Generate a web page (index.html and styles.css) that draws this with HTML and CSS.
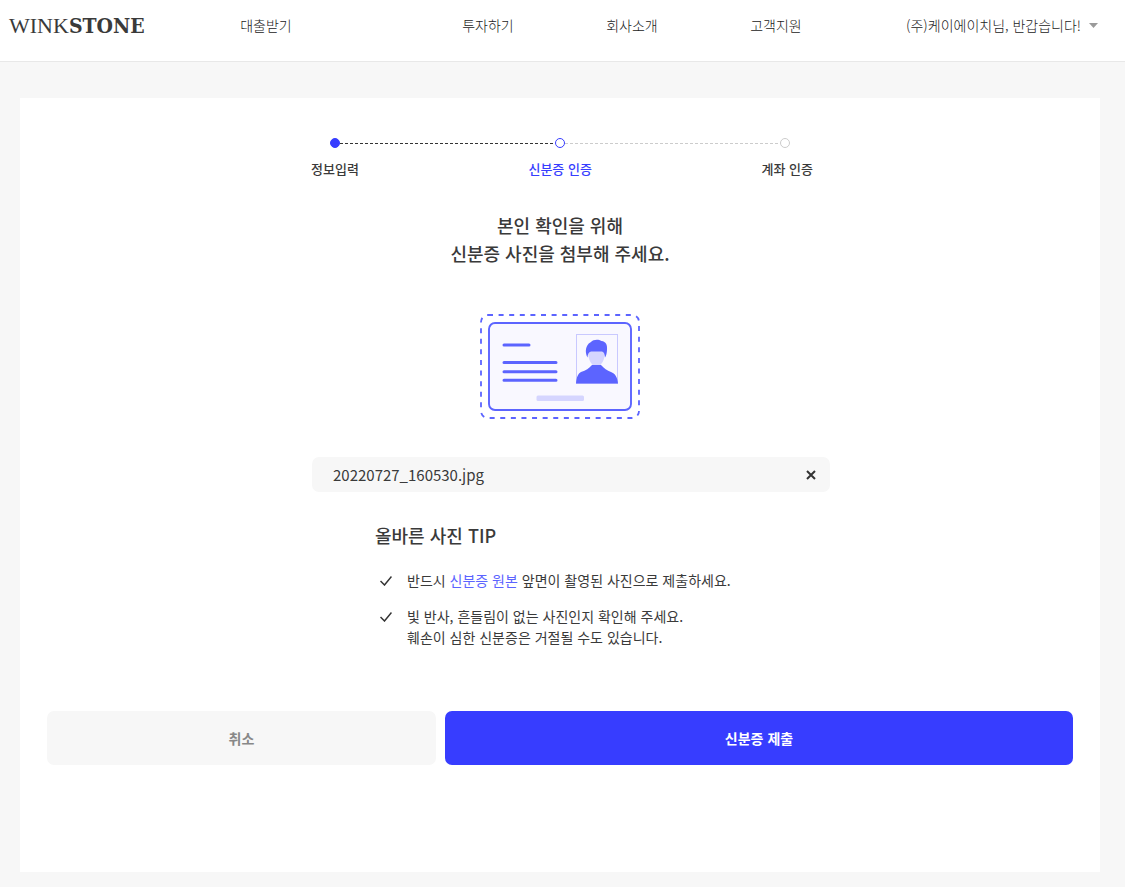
FILE: index.html
```
<!DOCTYPE html>
<html lang="ko">
<head>
    <meta charset="UTF-8">
    <meta name="viewport" content="width=device-width, initial-scale=1.0">
    <title>WINKSTONE</title>
    <link rel="stylesheet" href="styles.css">
</head>
<body>
    <header class="header">
        <a href="#" class="logo"><span class="logo-wink">WINK</span><span class="logo-stone">STONE</span></a>
        <nav class="nav">
            <a href="#" class="nav-main">대출받기</a>
            <a href="#">투자하기</a>
            <a href="#">회사소개</a>
            <a href="#">고객지원</a>
        </nav>
        <button type="button" class="user">
            (주)케이에이치님, 반갑습니다!
            <svg width="9" height="5" viewBox="0 0 9 5"><path d="M0 0h9L4.500 5z" fill="#9a9a9a"/></svg>
        </button>
    </header>

    <main class="main">
        <form class="panel">
            <div class="progress">
                <div class="track">
                    <span class="dot done"></span>
                    <span class="line done"></span>
                    <span class="dot current"></span>
                    <span class="line"></span>
                    <span class="dot"></span>
                </div>
                <ol class="steps">
                    <li>정보입력</li>
                    <li class="current">신분증 인증</li>
                    <li>계좌 인증</li>
                </ol>
            </div>

            <h1 class="title">본인 확인을 위해<br>신분증 사진을 첨부해 주세요.</h1>

            <svg class="id-card" width="160" height="105" viewBox="0 0 160 105" fill="none">
                <rect x="1" y="1" width="158" height="103" rx="7" stroke="#5c64ff" stroke-width="1.800" stroke-dasharray="5 5.600"/>
                <rect x="9" y="9" width="142" height="87" rx="6" fill="#f9f8ff" stroke="#5c64ff" stroke-width="1.900"/>
                <path d="M24 31h25M24 48.500h52M24 57.800h52M24 66.300h52" stroke="#5c64ff" stroke-width="3" stroke-linecap="round"/>
                <rect x="56.500" y="81.500" width="47.500" height="5.500" rx="1.500" fill="#d5d5ff"/>
                <rect x="96.500" y="20.500" width="41" height="49" stroke="#c9c9ff"/>
                <path d="M112.500 49h8v8l4 4-8 3-8-3 4-4z" fill="#d5d5ff"/>
                <path d="M108 37c0-5 3-8 8.500-8s8.500 3 8.500 8c0 9-3.500 15-8.500 15s-8.500-6-8.500-15z" fill="#d5d5ff"/>
                <path d="M107.500 43.500c-2.500-5-2-9.500.5-13 1-1.500 2-2 3-2.500 2-2.500 7.500-3 10.500-1 4.500.5 6 4 5.500 9-.2 3-.7 5.500-2 7.500-.3-3.500-.8-5.500-3-6h-11c-2.500.5-3.200 2.500-3.500 6z" fill="#5c64ff"/>
                <path d="M96 69.500c.5-6 2-10 5-11.500 5-1.500 8-3.500 11-7h9c3 3.500 6 5.500 10 7 4 1.500 6.500 5 7 11.500z" fill="#5c64ff"/>
            </svg>

            <div class="file">
                <span>20220727_160530.jpg</span>
                <button type="button" class="file-remove" aria-label="삭제">
                    <svg width="10" height="10" viewBox="0 0 10 10"><path d="M1 1l8 8M9 1L1 9" stroke="#333" stroke-width="2"/></svg>
                </button>
            </div>

            <section class="tip">
                <h2>올바른 사진 TIP</h2>
                <ul>
                    <li>
                        <svg width="12" height="10" viewBox="0 0 12 10"><path d="M.5 5l4 4 7-8.500" fill="none" stroke="#333" stroke-width="1.500"/></svg>
                        <p>반드시 <em>신분증 원본</em> 앞면이 촬영된 사진으로 제출하세요.</p>
                    </li>
                    <li>
                        <svg width="12" height="10" viewBox="0 0 12 10"><path d="M.5 5l4 4 7-8.500" fill="none" stroke="#333" stroke-width="1.500"/></svg>
                        <p>빛 반사, 흔들림이 없는 사진인지 확인해 주세요.<br>훼손이 심한 신분증은 거절될 수도 있습니다.</p>
                    </li>
                </ul>
            </section>

            <div class="buttons">
                <button type="button" class="btn btn-cancel">취소</button>
                <button type="submit" class="btn btn-submit">신분증 제출</button>
            </div>
        </form>
    </main>
</body>
</html>
```
FILE: styles.css
```
* {
    box-sizing: border-box;
}

body {
    margin: 0;
    background-color: #f7f7f7;
    color: #3a3a3a;
    font-family: "Noto Sans CJK KR", sans-serif;
    font-size: 14px;
    line-height: 21px;
}

a {
    color: inherit;
    text-decoration: none;
}

button {
    border: none;
    background: none;
    padding: 0;
    color: inherit;
    font-family: inherit;
    font-size: 14px;
    line-height: 21px;
    cursor: pointer;
}

h1, h2, p, ul, ol {
    margin: 0;
    padding: 0;
}

li {
    list-style: none;
}

.header {
    display: flex;
    align-items: center;
    height: 62px;
    padding: 0 27px 10px 9px;
    background-color: #fff;
    border-bottom: 1px solid #e8e8e8;
}

.logo {
    display: flex;
    align-items: baseline;
    width: 147px;
}

.logo-wink {
    font-family: "Liberation Serif", serif;
    font-size: 22px;
}

.logo-stone {
    font-family: "DejaVu Serif Condensed", "DejaVu Serif", serif;
    font-size: 21px;
    font-weight: bold;
}

.nav {
    display: flex;
    color: #222;
    font-weight: 300;
}

.nav a {
    width: 144px;
    text-align: center;
}

.nav .nav-main {
    width: 220px;
    margin-right: 40px;
}

.user {
    display: flex;
    align-items: center;
    gap: 8px;
    margin-left: auto;
    color: #222;
    font-weight: 300;
}

.main {
    padding: 36px 25px 15px 20px;
}

.panel {
    display: flex;
    flex-direction: column;
    align-items: center;
    padding: 40px 27px 107px;
    background-color: #fff;
}

.progress {
    width: 502px;
    max-width: 100%;
    margin-left: 4px;
}

.track {
    display: flex;
    align-items: center;
    padding: 0 23px 0 19px;
}

.dot {
    width: 10px;
    height: 10px;
    border: 1px solid #ccc;
    border-radius: 50%;
}

.dot.current {
    border-color: #373dff;
}

.dot.done {
    border-color: #373dff;
    background-color: #373dff;
}

.line {
    flex: 1;
    height: 1px;
    background: repeating-linear-gradient(to right, #ccc 0 3px, transparent 3px 5px);
}

.line.done {
    background: repeating-linear-gradient(to right, #333 0 3px, transparent 3px 5px);
}

.steps {
    display: flex;
    justify-content: space-between;
    margin-top: 10px;
    font-size: 13px;
    font-weight: 500;
}

.steps .current {
    color: #373dff;
}

.title {
    margin-top: 32px;
    font-size: 18px;
    font-weight: 500;
    line-height: 28px;
    text-align: center;
}

.id-card {
    margin-top: 47px;
}

.file {
    display: flex;
    align-items: center;
    justify-content: space-between;
    width: 518px;
    max-width: 100%;
    height: 35px;
    margin: 38px 0 0 22px;
    padding: 0 14px 0 21px;
    border-radius: 7px;
    background-color: #f7f7f7;
    font-size: 15px;
}

.file-remove {
    display: flex;
}

.tip {
    width: 370px;
    max-width: 100%;
    margin-top: 29px;
}

.tip h2 {
    font-size: 18px;
    font-weight: 500;
    line-height: 28px;
}

.tip ul {
    display: flex;
    flex-direction: column;
    gap: 15px;
    margin-top: 21px;
}

.tip li {
    display: flex;
    gap: 15px;
    padding-left: 5px;
}

.tip svg {
    flex: none;
    margin-top: 6px;
}

.tip em {
    color: #5c64ff;
    font-style: normal;
}

.buttons {
    display: flex;
    gap: 9px;
    width: 100%;
    margin-top: 63px;
}

.btn {
    height: 54px;
    border-radius: 7px;
    font-weight: 700;
}

.btn-cancel {
    flex: 389;
    background-color: #f7f7f7;
    color: #888;
}

.btn-submit {
    flex: 628;
    background-color: #373dff;
    color: #fff;
}
```
